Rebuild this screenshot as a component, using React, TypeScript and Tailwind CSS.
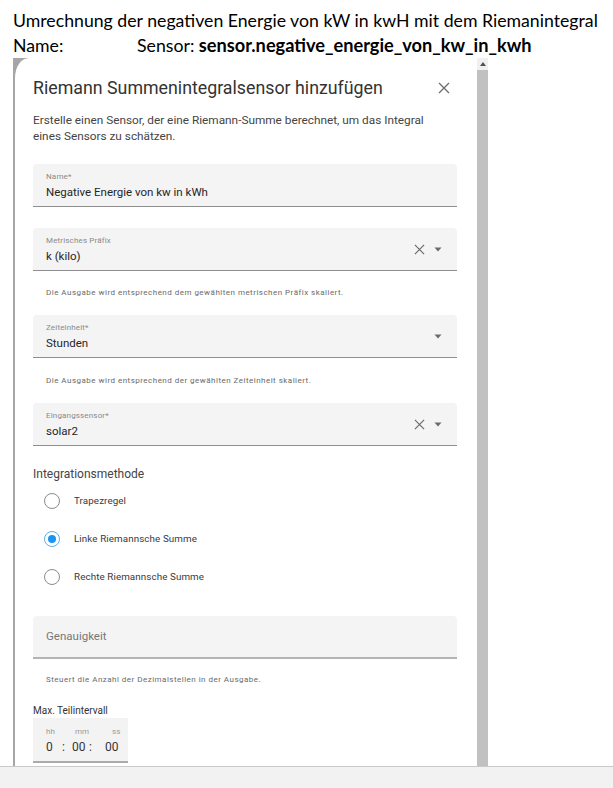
import React from 'react';

const roboto = { fontFamily: 'Roboto, "Liberation Sans", sans-serif' };

function Caret() {
  return (
    <svg width="8" height="5" viewBox="0 0 8 5" className="shrink-0">
      <path d="M0.5 0.5 L7.5 0.5 L4 4.5 Z" fill="#6b6b6b" />
    </svg>
  );
}

function ClearX({ size = 11 }: { size?: number }) {
  return (
    <svg width={size} height={size} viewBox="0 0 12 12" className="shrink-0">
      <path d="M1 1 L11 11 M11 1 L1 11" stroke="#6b6b6b" strokeWidth="1.3" fill="none" />
    </svg>
  );
}

interface FieldProps {
  label: string;
  value: string;
  clearable?: boolean;
  caret?: boolean;
  className?: string;
}

function Field({ label, value, clearable, caret, className }: FieldProps) {
  return (
    <div
      className={`h-[43px] rounded-t-[4px] bg-[#f4f4f4] border-b border-[#8e8e8e] pl-[13px] pr-[15px] flex items-center ${className ?? ''}`}
    >
      <div className="flex-1 flex flex-col pt-[1px]">
        <span className="text-[8px] leading-[10px] text-[#8a8a8a] tracking-[0.02em]">{label}</span>
        <span className="text-[11.5px] leading-[16px] text-[#262626] mt-[2px]">{value}</span>
      </div>
      <div className="flex items-center gap-[9px] pt-[1px]">
        {clearable && <ClearX />}
        {caret && <Caret />}
      </div>
    </div>
  );
}

function Helper({ text, className }: { text: string; className?: string }) {
  return (
    <div className={`flex items-center pl-[13px] ${className ?? ''}`}>
      <span className="text-[8px] leading-[10px] text-[#6a6a6a] tracking-[0.06em]">{text}</span>
    </div>
  );
}

function Radio({ label, checked }: { label: string; checked?: boolean }) {
  return (
    <div className="h-[38px] flex items-center pl-[11px]">
      {checked ? (
        <span className="w-[16px] h-[16px] rounded-full border-[1.5px] border-[#54b4f4] flex items-center justify-center">
          <span className="w-[8px] h-[8px] rounded-full bg-[#1e93f0]" />
        </span>
      ) : (
        <span className="w-[16px] h-[16px] rounded-full border-[1.5px] border-[#8c8c8c]" />
      )}
      <span className="ml-[14px] text-[9.8px] leading-[14px] text-[#3a3a3a] tracking-[0.01em]">{label}</span>
    </div>
  );
}

export default function App() {
  return (
    <div className="w-[613px] h-[788px] bg-white overflow-hidden flex flex-col">
      <div
        className="h-[57px] shrink-0 pl-[13px] pt-[9px] text-[17.7px] leading-[24px] text-black"
        style={{ fontFamily: 'Lato, "Open Sans", sans-serif' }}
      >
        <p className="h-[24px] whitespace-nowrap">Umrechnung der negativen Energie von kW in kwH mit dem Riemanintegral</p>
        <p className="h-[24px] flex items-baseline whitespace-nowrap">
          <span className="w-[124px]">Name:</span>
          <span>
            Sensor: <b className="text-[18.2px] leading-[24px]">sensor.negative_energie_von_kw_in_kwh</b>
          </span>
        </p>
      </div>

      <div className="mt-[1px] h-[708px] shrink-0 flex">
        {/* dialog, with the grey scrim showing at its left edge and rounded corner */}
        <div className="ml-[13px] w-[464px] bg-[#a6a6a6] flex">
          <div
            className="ml-[2px] flex-1 bg-white rounded-tl-[14px_20px] pl-[18px] pr-[20px] overflow-hidden"
            style={roboto}
          >
            <div className="mt-[18px] h-[24px] flex items-center justify-between">
              <span className="text-[17.8px] leading-[24px] text-[#333]">Riemann Summenintegralsensor hinzufügen</span>
              <span className="mr-[7px]">
                <ClearX size={12} />
              </span>
            </div>

            <p className="mt-[12px] text-[11.8px] leading-[16px] text-[#444]">
              Erstelle einen Sensor, der eine Riemann-Summe berechnet, um das Integral
              <br />
              eines Sensors zu schätzen.
            </p>

            <Field className="mt-[20px]" label="Name*" value="Negative Energie von kw in kWh" />
            <Field className="mt-[21px] h-[42px]" label="Metrisches Präfix" value="k (kilo)" clearable caret />
            <Helper className="h-[44px]" text="Die Ausgabe wird entsprechend dem gewählten metrischen Präfix skaliert." />
            <Field label="Zeiteinheit*" value="Stunden" caret />
            <Helper className="h-[45px]" text="Die Ausgabe wird entsprechend der gewählten Zeiteinheit skaliert." />
            <Field label="Eingangssensor*" value="solar2" clearable caret />

            <p className="mt-[20px] text-[12px] leading-[16px] text-[#444]">Integrationsmethode</p>
            <Radio label="Trapezregel" />
            <Radio label="Linke Riemannsche Summe" checked />
            <Radio label="Rechte Riemannsche Summe" />

            <div className="mt-[20px] h-[43px] rounded-t-[4px] bg-[#f4f4f4] border-b-2 border-[#b4b4b4] pl-[13px] flex items-center">
              <span className="text-[11.5px] text-[#777]">Genauigkeit</span>
            </div>
            <Helper className="h-[42px]" text="Steuert die Anzahl der Dezimalstellen in der Ausgabe." />

            <p className="mt-[2px] text-[10px] leading-[15px] text-[#333]">Max. Teilintervall</p>
            <div className="w-[95px] h-[45px] bg-[#f3f3f3] border-b-2 border-[#ababab] pl-[13px] pt-[9px]">
              <div className="flex text-[8px] leading-[10px] text-[#9a9a9a]">
                <span className="w-[29px]">hh</span>
                <span className="w-[37px]">mm</span>
                <span>ss</span>
              </div>
              <div className="flex text-[12px] leading-[16px] text-[#333] mt-[2px]">
                <span className="w-[16px]">0</span>
                <span className="w-[10px]">:</span>
                <span className="w-[17px]">00</span>
                <span className="w-[16px]">:</span>
                <span>00</span>
              </div>
            </div>
          </div>
        </div>

        {/* scrollbar */}
        <div className="w-[11px] flex flex-col">
          <div className="h-[12px] bg-[#f0f0f0] flex items-center justify-center">
            <svg width="6" height="4" viewBox="0 0 6 4">
              <path d="M0 4 L3 0 L6 4 Z" fill="#505050" />
            </svg>
          </div>
          <div className="flex-1 bg-[#c1c1c1]" />
        </div>
      </div>

      <div className="flex-1 border-t border-[#c9c9c9] bg-[#f2f2f2]" />
    </div>
  );
}
